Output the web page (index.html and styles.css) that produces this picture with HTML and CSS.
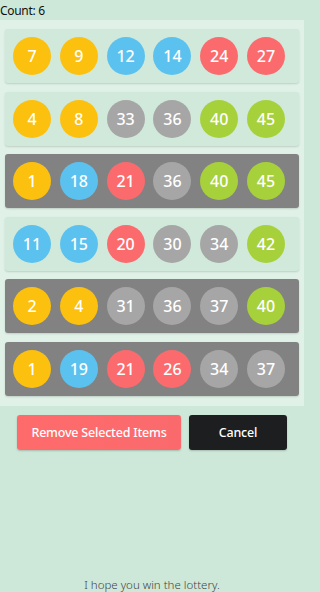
FILE: index.html
```html
<!DOCTYPE html>
<html>
<head>
<meta charset="utf-8">
<link rel="stylesheet" href="styles.css">
</head>
<body>
<div class="app">
  <div class="count">Count: 6</div>
  <div class="panel">
    <div class="row">
      <span class="ball y">7</span><span class="ball y">9</span><span class="ball b">12</span><span class="ball b">14</span><span class="ball r">24</span><span class="ball r">27</span>
    </div>
    <div class="row">
      <span class="ball y">4</span><span class="ball y">8</span><span class="ball g">33</span><span class="ball g">36</span><span class="ball l">40</span><span class="ball l">45</span>
    </div>
    <div class="row sel">
      <span class="ball y">1</span><span class="ball b">18</span><span class="ball r">21</span><span class="ball g">36</span><span class="ball l">40</span><span class="ball l">45</span>
    </div>
    <div class="row">
      <span class="ball b">11</span><span class="ball b">15</span><span class="ball r">20</span><span class="ball g">30</span><span class="ball g">34</span><span class="ball l">42</span>
    </div>
    <div class="row sel">
      <span class="ball y">2</span><span class="ball y">4</span><span class="ball g">31</span><span class="ball g">36</span><span class="ball g">37</span><span class="ball l">40</span>
    </div>
    <div class="row sel">
      <span class="ball y">1</span><span class="ball b">19</span><span class="ball r">21</span><span class="ball r">26</span><span class="ball g">34</span><span class="ball g">37</span>
    </div>
  </div>
  <div class="actions">
    <button class="btn remove">Remove Selected Items</button>
    <button class="btn cancel">Cancel</button>
  </div>
  <div class="spacer"></div>
  <div class="footer">I hope you win the lottery.</div>
</div>
</body>
</html>
```
FILE: styles.css
```css
html, body {
  margin: 0;
  padding: 0;
  height: 100%;
}
body {
  background: #cde8d8;
  font-family: "Noto Sans", "DejaVu Sans", sans-serif;
  overflow: hidden;
}
.app {
  width: 304px;
  height: 592px;
  display: flex;
  flex-direction: column;
}
.count {
  height: 20px;
  font-size: 12px;
  line-height: 22px;
  color: #111;
  letter-spacing: -0.3px;
}
.panel {
  background: #e0f2e8;
  padding: 9px 5px 10px 5px;
  display: flex;
  flex-direction: column;
  gap: 8.6px;
}
.row {
  height: 54px;
  background: #d0e9da;
  border-radius: 3px;
  box-shadow: 0 1px 2px rgba(0,0,0,0.15);
  display: flex;
  align-items: center;
  padding-left: 8px;
  gap: 8.8px;
}
.row.sel {
  background: #828282;
}
.ball {
  width: 38px;
  height: 38px;
  border-radius: 50%;
  color: #fff;
  font-size: 16px;
  font-weight: 500;
  display: flex;
  align-items: center;
  justify-content: center;
  flex: none;
}
.ball.y { background: #fcc00e; }
.ball.b { background: #5bc2f0; }
.ball.r { background: #fb6b6e; }
.ball.g { background: #a6a6a6; }
.ball.l { background: #a7d13b; }
.actions {
  display: flex;
  padding: 9px 17px 0 17px;
  gap: 8px;
}
.btn {
  height: 35px;
  border: none;
  border-radius: 3px;
  font-family: "Noto Sans", "DejaVu Sans", sans-serif;
  font-size: 12.5px;
  font-weight: 500;
  color: #fff;
  box-shadow: 0 1px 2px rgba(0,0,0,0.2);
  letter-spacing: -0.2px;
  padding: 0;
}
.remove {
  width: 164px;
  background: linear-gradient(90deg, #ff6b6b, #fa6a6d);
}
.cancel {
  width: 98px;
  background: #1c1e1f;
}
.spacer {
  flex: 1;
}
.footer {
  text-align: center;
  font-size: 11.5px;
  color: #444;
  font-weight: 300;
  height: 14px;
  line-height: 14px;
}
```
